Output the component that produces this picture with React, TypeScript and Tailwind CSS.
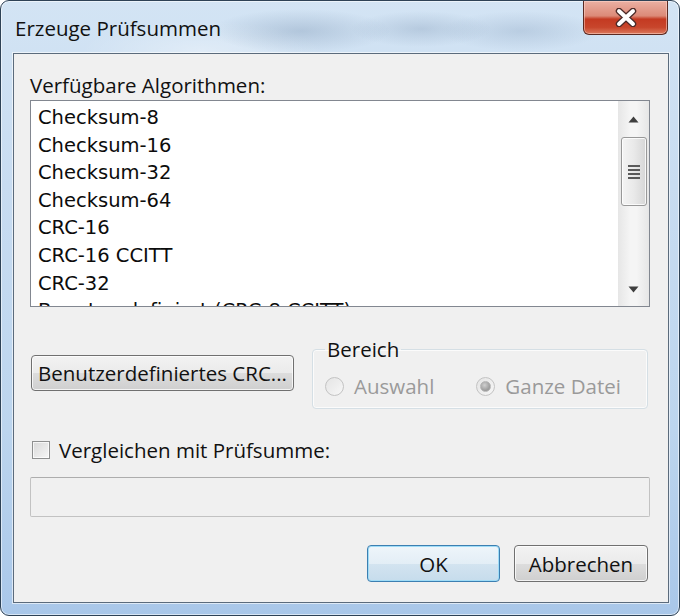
import React from "react";

const items = [
  "Checksum-8",
  "Checksum-16",
  "Checksum-32",
  "Checksum-64",
  "CRC-16",
  "CRC-16 CCITT",
  "CRC-32",
  "Benutzerdefiniert (CRC-8 CCITT)",
];

function Radio({ checked }: { checked?: boolean }) {
  return (
    <span className="flex h-[19px] w-[19px] items-center justify-center rounded-full border border-[#c3c3c3] bg-[linear-gradient(135deg,#e4e4e4_0%,#f7f7f7_100%)]">
      {checked && (
        <span className="h-[11px] w-[11px] rounded-full border border-[#b5b5b5] bg-[radial-gradient(circle_at_40%_35%,#d0d0d0_0%,#9a9a9a_70%)]" />
      )}
    </span>
  );
}

function Arrow({ up }: { up?: boolean }) {
  return (
    <svg width="11" height="7" viewBox="0 0 11 7">
      {up ? (
        <polygon points="5.5,0.5 10.5,6.5 0.5,6.5" fill="#3f3f3f" />
      ) : (
        <polygon points="0.5,0.5 10.5,0.5 5.5,6.5" fill="#3f3f3f" />
      )}
    </svg>
  );
}

export default function App() {
  return (
    <div className="h-[616px] w-[680px] bg-white font-['Open_Sans',sans-serif] text-[#111111]">
      <div className="flex h-full w-full flex-col overflow-hidden rounded-[9px] border border-[#2e4256] bg-[radial-gradient(ellipse_90px_22px_at_300px_30px,rgba(120,145,175,0.35),transparent),radial-gradient(ellipse_70px_18px_at_420px_28px,rgba(120,145,175,0.3),transparent),radial-gradient(ellipse_80px_20px_at_520px_30px,rgba(130,155,185,0.3),transparent),radial-gradient(ellipse_120px_30px_at_200px_50px,rgba(255,255,255,0.35),transparent),linear-gradient(180deg,#d3e4f4_0%,#c8dcf1_30%,#bcd5ee_70%,#a9c7e9_100%)] shadow-[inset_0_0_0_1px_rgba(255,255,255,0.55)]">
        {/* title bar */}
        <div className="flex h-[52px] shrink-0 items-start justify-between">
          <div className="pl-[14px] pt-[14px] text-[20.5px] leading-[26px] text-[#111111]">
            Erzeuge Prüfsummen
          </div>
          <div className="mr-[11px] flex h-[34px] w-[85px] items-center justify-center rounded-b-[6px] border border-t-0 border-[#5b2a22] bg-[linear-gradient(180deg,#eab0a3_0%,#dc8a78_45%,#c43a22_55%,#c8462c_80%,#dc7a5e_100%)] shadow-[inset_0_0_0_1px_rgba(255,220,210,0.5)]">
            <svg width="22" height="19" viewBox="0 0 22 19">
              <path d="M4 3 L18 16 M18 3 L4 16" stroke="#4a2a28" strokeWidth="6.5" strokeLinecap="round" />
              <path d="M4 3 L18 16 M18 3 L4 16" stroke="#ffffff" strokeWidth="4" strokeLinecap="round" />
            </svg>
          </div>
        </div>

        {/* client area */}
        <div className="mb-[12px] ml-[12px] mr-[10px] flex flex-1 flex-col border border-[#5b6b7c] bg-[#f0f0f0] shadow-[0_0_0_1px_rgba(255,255,255,0.6)]">
          <div className="ml-[16px] mt-[19px] text-[20.5px] leading-[24px]">Verfügbare Algorithmen:</div>

          {/* list box */}
          <div className="ml-[16px] mt-[3px] flex h-[207px] w-[620px] overflow-hidden border border-[#828790] bg-white">
            <div className="flex-1 overflow-hidden pl-[7px] pt-[3px] font-['DejaVu_Sans',sans-serif] text-[19.5px] leading-[27.6px] text-[#0c0c0c]">
              {items.map((t) => (
                <div key={t} className="whitespace-nowrap">
                  {t}
                </div>
              ))}
            </div>
            <div className="flex w-[31px] flex-col items-center bg-[linear-gradient(90deg,#e6e6e6_0%,#f5f5f5_40%,#f5f5f5_60%,#e6e6e6_100%)]">
              <div className="flex h-[36px] items-center justify-center">
                <Arrow up />
              </div>
              <div className="flex h-[69px] w-[26px] items-center justify-center rounded-[3px] border border-[#989898] bg-[linear-gradient(90deg,#f4f4f4_0%,#e9e9e9_50%,#d6d6d6_100%)] shadow-[inset_0_0_0_1px_rgba(255,255,255,0.8)]">
                <div className="flex flex-col gap-[2px]">
                  <span className="h-[2px] w-[12px] bg-[#5a5a5a]" />
                  <span className="h-[2px] w-[12px] bg-[#5a5a5a]" />
                  <span className="h-[2px] w-[12px] bg-[#5a5a5a]" />
                  <span className="h-[2px] w-[12px] bg-[#5a5a5a]" />
                </div>
              </div>
              <div className="flex-1" />
              <div className="flex h-[34px] items-center justify-center">
                <Arrow />
              </div>
            </div>
          </div>

          {/* button + group */}
          <div className="mt-[30px] flex items-start">
            <button className="ml-[17px] mt-[18px] flex h-[36px] w-[263px] items-center justify-center rounded-[4px] border border-[#707070] bg-[linear-gradient(180deg,#f2f2f2_0%,#ebebeb_50%,#dddddd_50%,#cfcfcf_100%)] text-[20.5px] leading-[24px] shadow-[inset_0_0_0_1px_rgba(255,255,255,0.75)]">
              Benutzerdefiniertes CRC...
            </button>
            <fieldset className="ml-[18px] w-[336px] rounded-[4px] border border-[#d5dfe5] px-[12px] pb-[10px] shadow-[inset_0_0_0_1px_rgba(255,255,255,0.7)]">
              <legend className="px-[2px] text-[20.5px] leading-[24px] text-[#111111]">Bereich</legend>
              <div className="flex items-center pt-[13px] text-[20.5px] leading-[24px] text-[#9a9a9a]">
                <Radio />
                <span className="ml-[10px]">Auswahl</span>
                <span className="ml-[42px]">
                  <Radio checked />
                </span>
                <span className="ml-[10px]">Ganze Datei</span>
              </div>
            </fieldset>
          </div>

          {/* checkbox */}
          <div className="ml-[18px] mt-[29px] flex items-center text-[20.5px] leading-[24px]">
            <span className="h-[18px] w-[18px] border border-[#8e8f8f] bg-[linear-gradient(135deg,#d8d8d8_0%,#f6f6f6_100%)] shadow-[inset_0_0_0_1px_rgba(255,255,255,0.7)]" />
            <span className="ml-[9px]">Vergleichen mit Prüfsumme:</span>
          </div>

          {/* text field */}
          <div className="ml-[16px] mt-[15px] h-[40px] w-[620px] rounded-[2px] border border-[#c2c2c2] border-t-[#adadad] bg-[#f0f0f0]" />

          {/* dialog buttons */}
          <div className="mt-[28px] flex justify-end gap-[14px] pr-[20px]">
            <button className="flex h-[37px] w-[133px] items-center justify-center rounded-[4px] border border-[#3c7fb1] bg-[linear-gradient(180deg,#eef5fa_0%,#e3eef6_50%,#d3e4f0_50%,#c6dcec_100%)] text-[20.5px] leading-[24px] shadow-[inset_0_0_0_1px_#9fdcf7]">
              OK
            </button>
            <button className="flex h-[37px] w-[134px] items-center justify-center rounded-[4px] border border-[#707070] bg-[linear-gradient(180deg,#f2f2f2_0%,#ebebeb_50%,#dddddd_50%,#cfcfcf_100%)] text-[20.5px] leading-[24px] shadow-[inset_0_0_0_1px_rgba(255,255,255,0.75)]">
              Abbrechen
            </button>
          </div>
        </div>
      </div>
    </div>
  );
}
